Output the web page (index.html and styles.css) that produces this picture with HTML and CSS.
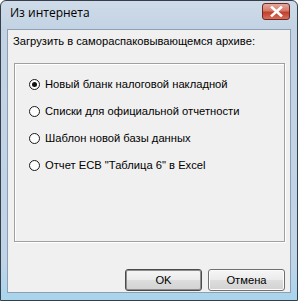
FILE: index.html
```html
<!DOCTYPE html>
<html>
<head>
<meta charset="utf-8">
<link rel="stylesheet" href="styles.css">
</head>
<body>
<div class="window">
  <div class="titlebar">
    <span class="title">Из интернета</span>
    <div class="close">
      <svg width="13" height="11" viewBox="0 0 13 11"><path d="M2 1.5 L11 9.5 M11 1.5 L2 9.5" stroke="#fff" stroke-width="2.6" stroke-linecap="square"/></svg>
    </div>
  </div>
  <div class="client">
    <div class="label">Загрузить в самораспаковывающемся архиве:</div>
    <div class="group">
      <label class="radio"><span class="dot checked"></span>Новый бланк налоговой накладной</label>
      <label class="radio"><span class="dot"></span>Списки для официальной отчетности</label>
      <label class="radio"><span class="dot"></span>Шаблон новой базы данных</label>
      <label class="radio"><span class="dot"></span>Отчет ЕСВ "Таблица 6" в Excel</label>
    </div>
    <div class="buttons">
      <button class="btn default">OK</button>
      <button class="btn">Отмена</button>
    </div>
  </div>
</div>
</body>
</html>
```
FILE: styles.css
```css
html, body { margin: 0; padding: 0; background: #fff; }
body { width: 298px; height: 301px; overflow: hidden; }
.window {
  box-sizing: border-box;
  width: 298px;
  height: 301px;
  border: 1px solid #343f4b;
  border-radius: 6px 6px 0 0;
  background: linear-gradient(#cfdbe8 0, #c3d3e4 28px, #c0d4e8 260px, #a8d4ec 100%);
  padding: 0 6px 7px 6px;
  display: flex;
  flex-direction: column;
  font-family: Tahoma, "DejaVu Sans", sans-serif;
}
.titlebar {
  height: 28px;
  display: flex;
  align-items: center;
  justify-content: space-between;
  flex: none;
}
.title {
  font-family: "Segoe UI", "Open Sans", "Noto Sans", sans-serif;
  font-size: 12px;
  color: #000;
  padding-left: 3px;
  margin-top: -5px;
}
.close {
  width: 28px;
  height: 17px;
  box-sizing: border-box;
  margin-right: 1px;
  margin-top: -7px;
  border: 1px solid #6d2a22;
  border-radius: 3px;
  background: linear-gradient(#e4a89d 0%, #d67a6b 45%, #c2402b 55%, #d4705c 100%);
  display: flex;
  align-items: center;
  justify-content: center;
}
.close svg { display: block; }
.client {
  flex: 1;
  background: #f0f0f0;
  border: 1px solid #8d9fb3;
  display: flex;
  flex-direction: column;
  padding: 0 5px 0 6px;
  font-family: "Liberation Sans", Arial, sans-serif;
  font-size: 11px;
  color: #000;
}
.label {
  margin-top: 5px;
  margin-left: -1px;
  height: 13px;
  line-height: 13px;
  font-size: 11.2px;
}
.group {
  margin-top: 15px;
  height: 179px;
  box-sizing: border-box;
  border: 1px solid #a0a0a0;
  box-shadow: inset 1px 1px 0 #fff, 1px 1px 0 #fff;
  padding: 14px 0 0 14px;
  display: flex;
  flex-direction: column;
  gap: 14px;
  font-size: 11.2px;
}
.radio {
  display: flex;
  align-items: center;
  height: 13px;
  line-height: 13px;
  gap: 5px;
}
.dot {
  width: 11px;
  height: 11px;
  box-sizing: border-box;
  border: 1px solid #1a1a1a;
  border-radius: 50%;
  background: #fff;
  position: relative;
  flex: none;
}
.dot.checked::after {
  content: "";
  position: absolute;
  left: 2px;
  top: 2px;
  width: 5px;
  height: 5px;
  border-radius: 50%;
  background: #111;
}
.buttons {
  margin-top: auto;
  margin-bottom: 1px;
  display: flex;
  justify-content: flex-end;
  gap: 6px;
  padding-right: 0;
}
.btn {
  width: 77px;
  height: 22px;
  box-sizing: border-box;
  border: 1px solid #707070;
  border-radius: 3px;
  background: linear-gradient(#f6f6f6 0%, #ebebeb 48%, #dddddd 52%, #d2d2d2 100%);
  font-family: "Liberation Sans", Arial, sans-serif;
  font-size: 11.2px;
  color: #000;
  padding: 0;
  box-shadow: inset 0 0 0 1px #fcfcfc;
}
.btn.default {
  border-color: #4a4a4a;
  box-shadow: inset 0 0 0 1px #8e8e8e;
}
```
